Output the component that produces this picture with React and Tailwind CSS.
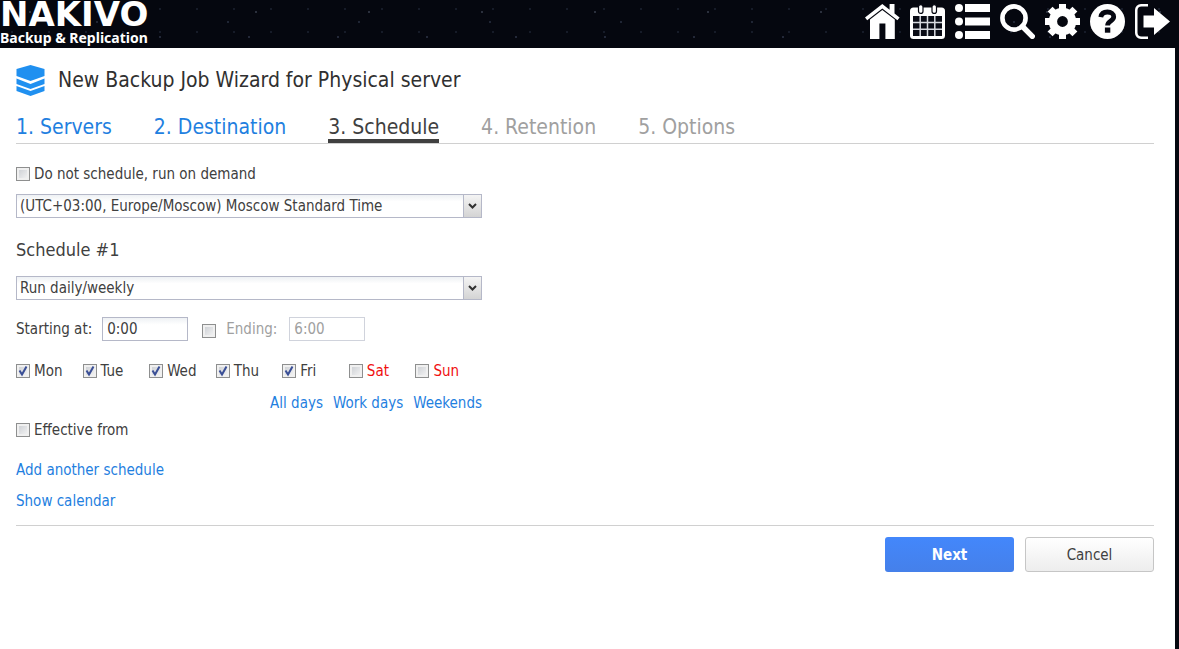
import { useState } from 'react';

const DAYS = ['Mon', 'Tue', 'Wed', 'Thu', 'Fri', 'Sat', 'Sun'];
const WORK_DAYS = DAYS.slice(0, 5);
const WEEKEND = DAYS.slice(5);

const STEPS = [
  { label: '1. Servers', status: 'done' },
  { label: '2. Destination', status: 'done' },
  { label: '3. Schedule', status: 'current' },
  { label: '4. Retention', status: 'next' },
  { label: '5. Options', status: 'next' },
];

const STEP_STYLES = {
  done: 'border-transparent text-[#1f80e0]',
  current: 'border-[#404040] text-[#404040]',
  next: 'border-transparent text-[#a0a0a0]',
};

function HomeIcon() {
  return (
    <svg viewBox="0 0 35 35" className="size-full" fill="currentColor">
      <path d="M17.3 0 0 13.6l2.2 2.7L17.3 4.6l15.1 11.7 2.2-2.7-5.1-4V0h-4.9v5.8z" />
      <path d="M17.3 6 5 15.6V35h9.4V19.4h6V35h9.4V15.6z" />
    </svg>
  );
}

function CalendarIcon() {
  return (
    <svg viewBox="0 0 35 35" className="size-full">
      <rect y="3.500" width="35" height="31.500" rx="3.500" fill="currentColor" />
      <path fill="#0a0c16" d="M3 12h29v20H3z" />
      <path
        d="M10.200 12v20M17.500 12v20M24.800 12v20M3 18.600h29M3 25.300h29"
        stroke="#d8dae0"
        strokeWidth="1.500"
      />
      <g fill="currentColor" stroke="#060812" strokeWidth="1.200">
        <rect x="8.500" y="0.600" width="4.500" height="8.800" rx="2.200" />
        <rect x="22" y="0.600" width="4.500" height="8.800" rx="2.200" />
      </g>
    </svg>
  );
}

function ListIcon() {
  return (
    <svg viewBox="0 0 35 35" className="size-full" fill="currentColor">
      <circle cx="4" cy="4" r="4" />
      <circle cx="4" cy="17.5" r="4" />
      <circle cx="4" cy="31" r="4" />
      <path d="M10 0h25v8H10zM10 13.5h25v8H10zM10 27h25v8H10z" />
    </svg>
  );
}

function SearchIcon() {
  return (
    <svg viewBox="0 0 35 35" className="size-full" fill="none" stroke="currentColor">
      <circle cx="14" cy="14" r="11.6" strokeWidth="4.6" />
      <path d="m22.5 22.5 9.8 9.8" strokeWidth="5.4" strokeLinecap="round" />
    </svg>
  );
}

function GearIcon() {
  return (
    <svg viewBox="0 0 35 35" className="size-full" fill="none" stroke="currentColor">
      <circle cx="17.5" cy="17.5" r="9.6" strokeWidth="8.4" />
      <path
        d="M17.5 0v6M17.5 29v6M0 17.5h6M29 17.5h6M5.1 5.1l4.3 4.3M25.6 25.6l4.3 4.3M5.1 29.9l4.3-4.3M25.6 9.4l4.3-4.3"
        strokeWidth="7"
      />
    </svg>
  );
}

function HelpIcon() {
  return (
    <svg viewBox="0 0 35 35" className="size-full">
      <circle cx="17.5" cy="17.5" r="17.5" fill="currentColor" />
      <path
        d="M10.800 13.200c.6-3.600 3-5.200 6.600-5.200 3.800 0 6.300 1.900 6.300 4.800 0 4.300-6.100 4-6.100 8.600"
        fill="none"
        stroke="#060812"
        strokeWidth="4.800"
      />
      <rect x="14.900" y="23.500" width="5.400" height="5.200" fill="#060812" />
    </svg>
  );
}

function ExitIcon() {
  return (
    <svg viewBox="0 0 35 35" className="size-full" fill="currentColor">
      <path d="M13 0v2.500H6.500A4 4 0 0 0 2.500 6.500v22A4 4 0 0 0 6.500 32.500H13V35H6a6 6 0 0 1-6-6V6a6 6 0 0 1 6-6z" />
      <path d="M8.500 11.500H19V4l16 13.500L19 31v-7.500H8.500z" />
    </svg>
  );
}

function StackIcon() {
  return (
    <svg viewBox="0 0 29 31" className="h-[31px] w-[29px]" fill="#2090f0">
      <path d="M14.500 0 28.500 4v7l-14 5-14-5V4z" />
      <path d="m.5 13.500 14 5.500 14-5.500v5.500l-14 5-14-5z" />
      <path d="m.5 21 14 5 14-5v5L14.500 31 .5 26z" />
    </svg>
  );
}

const TOOLS = [
  { name: 'Home', Icon: HomeIcon },
  { name: 'Calendar', Icon: CalendarIcon },
  { name: 'Activities', Icon: ListIcon },
  { name: 'Search', Icon: SearchIcon },
  { name: 'Settings', Icon: GearIcon },
  { name: 'Help', Icon: HelpIcon },
  { name: 'Log out', Icon: ExitIcon },
];

function Header() {
  return (
    <header className="flex h-12 items-start justify-between bg-[#05070f] bg-[radial-gradient(circle_at_30px_12px,#2b303d_1px,transparent_1px),radial-gradient(circle_at_71px_37px,#232838_1px,transparent_1px),radial-gradient(circle_at_97px_22px,#1f2534_1px,transparent_1px),radial-gradient(circle_at_12px_9px,#161b28_1px,transparent_1px)] bg-[length:113px_48px,89px_43px,131px_31px,37px_23px] text-white">
      <a href="#" className="flex flex-col whitespace-nowrap">
        <span className="font-['DejaVu_Sans',sans-serif] text-[34px] leading-7 font-bold">
          NAKIVO
        </span>
        <span className="font-['Noto_Sans',sans-serif] text-sm leading-5 font-bold">
          Backup &amp; Replication
        </span>
      </a>
      <nav className="flex gap-[10px] pt-1 pr-[9px]">
        {TOOLS.map(({ name, Icon }) => (
          <button key={name} type="button" aria-label={name} className="size-[35px] cursor-pointer">
            <Icon />
          </button>
        ))}
      </nav>
    </header>
  );
}

function Checkbox({ label, className = 'text-[#404040]', ...props }) {
  return (
    <label className={`flex items-center gap-1 ${className}`}>
      <span className="relative flex size-[14px]">
        <input
          type="checkbox"
          className="peer size-[14px] appearance-none border border-[#8e8f8f] bg-linear-to-br from-[#c8cbd0] to-[#f8f8f8] shadow-[inset_0_0_0_2px_#f0f0f0]"
          {...props}
        />
        <svg
          viewBox="0 0 14 14"
          className="pointer-events-none absolute inset-0 hidden peer-checked:block"
          fill="none"
          stroke="#3a4f96"
          strokeWidth="2"
        >
          <path d="m3.500 6.500 2.500 4 4.500-8" />
        </svg>
      </span>
      {label}
    </label>
  );
}

function Select({ label, options }) {
  return (
    <div className="relative">
      <select
        aria-label={label}
        className="block h-6 w-full appearance-none border border-[#b5b8c8] bg-white bg-linear-to-b from-[#eef1f4] to-white to-30% pr-6 pl-[3px]"
      >
        {options.map((option) => (
          <option key={option}>{option}</option>
        ))}
      </select>
      <span className="pointer-events-none absolute inset-y-0 right-0 flex w-[19px] items-center justify-center border border-[#b5b8c8] bg-linear-to-b from-[#f4f4f4] to-[#d4d4d4]">
        <svg viewBox="0 0 9 6" className="h-[6px] w-[9px]" fill="none" stroke="#303030" strokeWidth="2">
          <path d="m1 1 3.500 3.500L8 1" />
        </svg>
      </span>
    </div>
  );
}

export default function App() {
  const [days, setDays] = useState(WORK_DAYS);
  const [ending, setEnding] = useState(false);

  const toggleDay = (day) => {
    setDays(days.includes(day) ? days.filter((d) => d !== day) : [...days, day]);
  };

  return (
    <div className="flex min-h-screen flex-col bg-[#05070f] font-['DejaVu_Sans_Condensed','Noto_Sans',sans-serif] text-[15px] leading-5 text-[#404040]">
      <Header />
      <main className="mr-1 flex-1 bg-white pt-4 pr-[21px] pl-4">
        <div className="flex items-center gap-[13px]">
          <StackIcon />
          <h1 className="text-[21px] leading-8 text-[#303030]">
            New Backup Job Wizard for Physical server
          </h1>
        </div>

        <nav className="mt-[19px] flex gap-[42px] border-b border-[#d0d0d0] text-[21px]">
          {STEPS.map(({ label, status }) => (
            <a key={label} href="#" className={`border-b-4 leading-6 ${STEP_STYLES[status]}`}>
              {label}
            </a>
          ))}
        </nav>

        <form className="mt-5 w-[466px]" onSubmit={(e) => e.preventDefault()}>
          <Checkbox label="Do not schedule, run on demand" />
          <div className="mt-[10px]">
            <Select
              label="Time zone"
              options={['(UTC+03:00, Europe/Moscow) Moscow Standard Time']}
            />
          </div>

          <h2 className="mt-[18px] text-lg leading-7">Schedule #1</h2>
          <div className="mt-3">
            <Select label="Frequency" options={['Run daily/weekly']} />
          </div>

          <div className="mt-[17px] flex items-center">
            <label htmlFor="start">Starting at:</label>
            <input
              id="start"
              defaultValue="0:00"
              className="ml-[10px] h-6 w-[86px] border border-[#b5b8c8] bg-linear-to-b from-[#eef1f4] to-white to-30% px-1"
            />
            <div className="mt-1 ml-[14px] flex">
              <Checkbox
                aria-label="Set ending time"
                checked={ending}
                onChange={(e) => setEnding(e.target.checked)}
              />
            </div>
            <label htmlFor="end" className="ml-[10px] text-[#a0a0a0]">
              Ending:
            </label>
            <input
              id="end"
              defaultValue="6:00"
              disabled={!ending}
              className="ml-3 h-6 w-[76px] border border-[#d0d3dc] px-1 disabled:text-[#a0a0a0]"
            />
          </div>

          <div className="mt-5 grid grid-cols-7">
            {DAYS.map((day) => (
              <Checkbox
                key={day}
                label={day}
                className={WEEKEND.includes(day) ? 'text-[#f01010]' : 'text-[#404040]'}
                checked={days.includes(day)}
                onChange={() => toggleDay(day)}
              />
            ))}
          </div>

          <div className="mt-3 flex justify-end gap-[10px] text-[#1f80e0]">
            <button type="button" onClick={() => setDays(DAYS)}>
              All days
            </button>
            <button type="button" onClick={() => setDays(WORK_DAYS)}>
              Work days
            </button>
            <button type="button" onClick={() => setDays(WEEKEND)}>
              Weekends
            </button>
          </div>

          <div className="mt-[7px]">
            <Checkbox label="Effective from" />
          </div>
          <div className="mt-5 flex flex-col items-start gap-[11px] text-[#1f80e0]">
            <a href="#">Add another schedule</a>
            <a href="#">Show calendar</a>
          </div>
        </form>

        <div className="mt-[14px] flex justify-end gap-[11px] border-t border-[#d0d0d0] pt-[11px]">
          <button
            type="button"
            className="h-[35px] w-[129px] rounded-[3px] bg-linear-to-b from-[#4387fb] to-[#4580ea] font-bold text-white"
          >
            Next
          </button>
          <button
            type="button"
            className="h-[35px] w-[129px] rounded-[3px] border border-[#c6c6c6] bg-linear-to-b from-white to-[#ededed]"
          >
            Cancel
          </button>
        </div>
      </main>
    </div>
  );
}
